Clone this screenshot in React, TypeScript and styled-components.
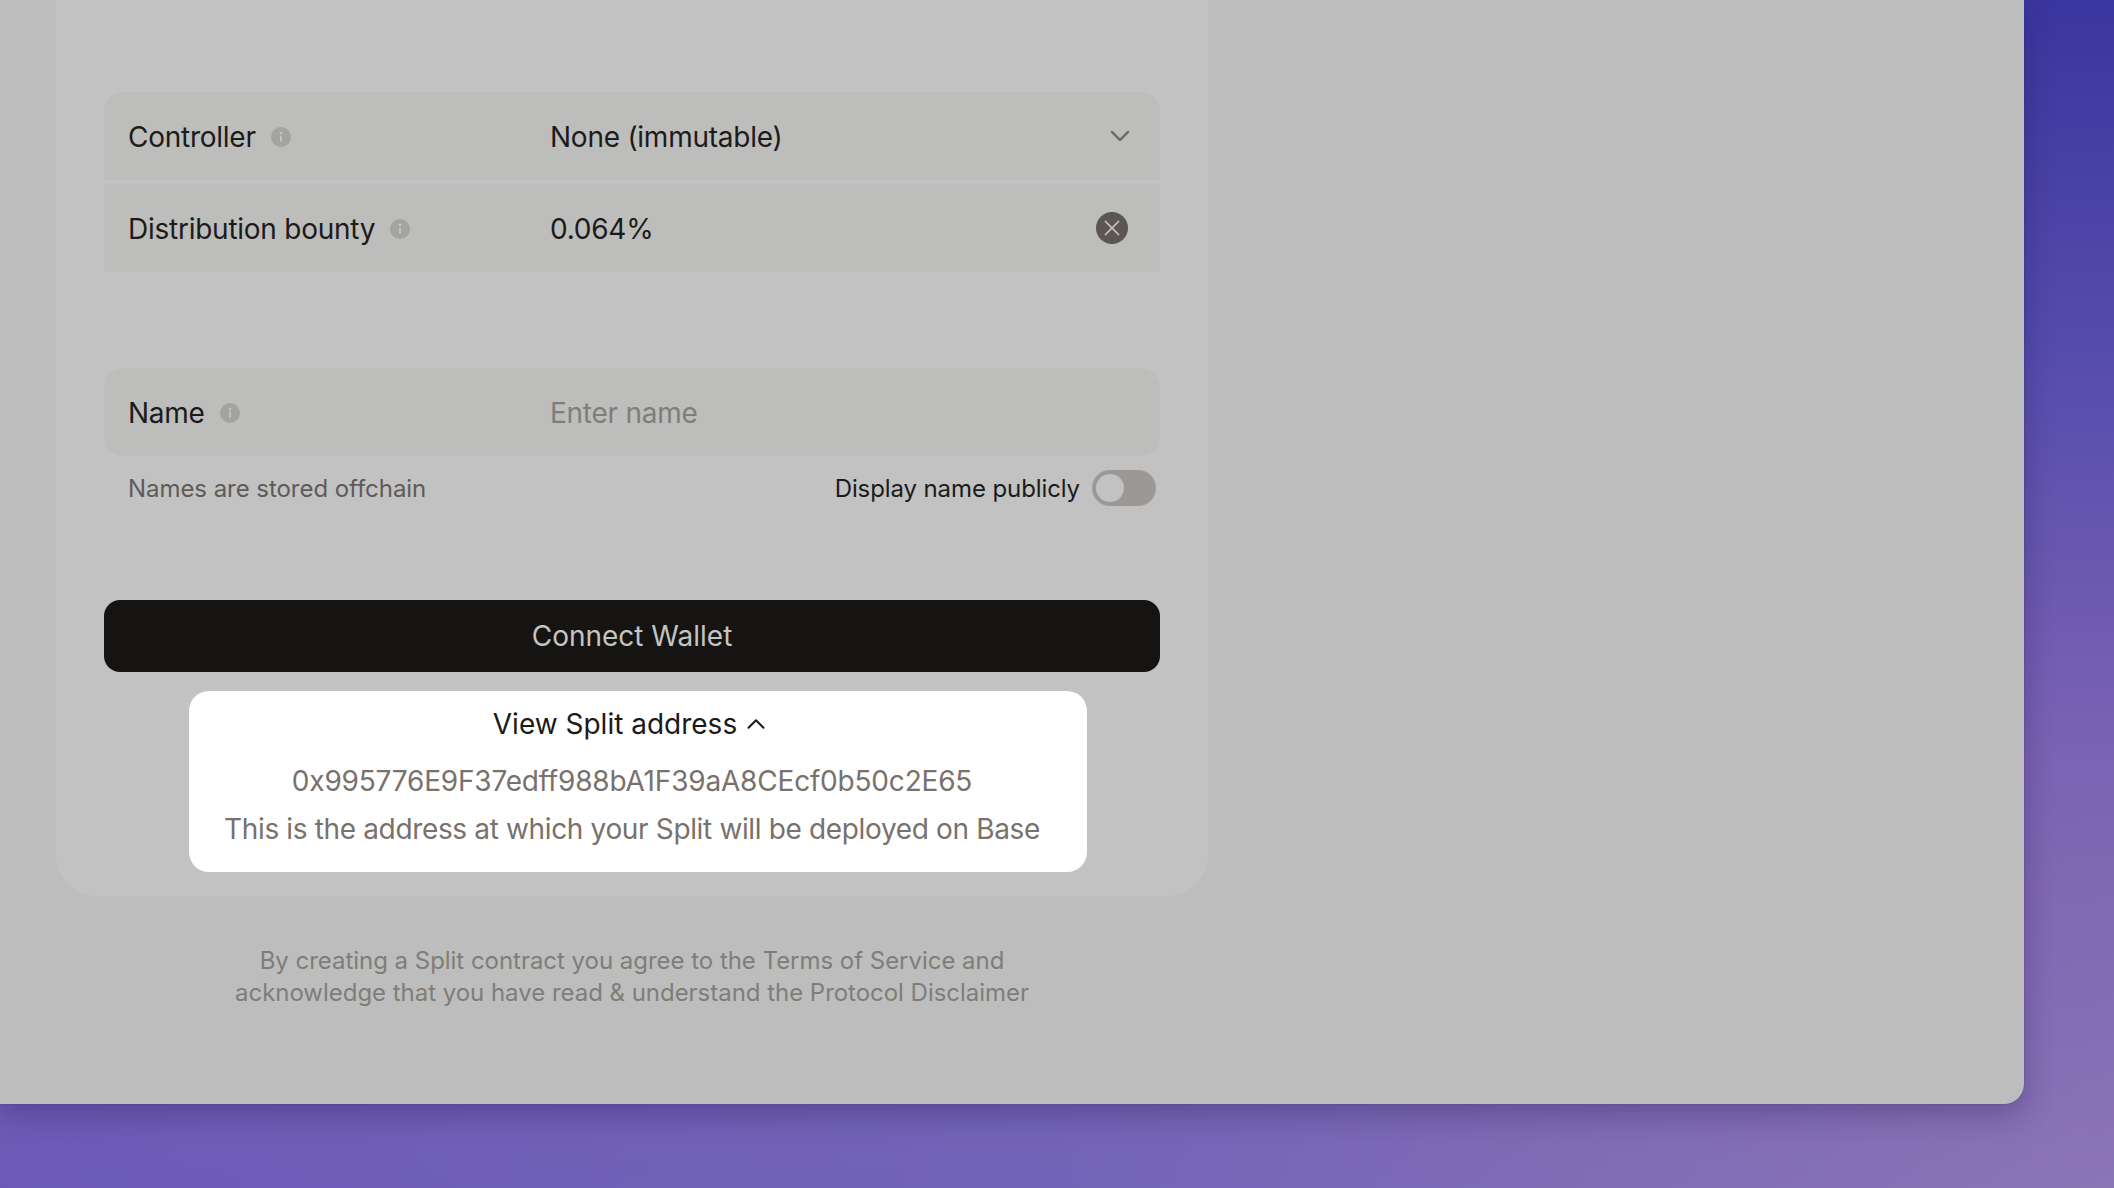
import styled, { createGlobalStyle } from "styled-components";
import { ChevronDown, ChevronUp, X } from "lucide-react";

const GlobalStyle = createGlobalStyle`
  html, body {
    margin: 0;
    height: 100%;
    overflow: hidden;
  }
  body {
    font-family: Inter, "Liberation Sans", sans-serif;
    -webkit-font-smoothing: antialiased;
  }
`;

const Desktop = styled.div`
  width: 2114px;
  height: 1188px;
  background:
    linear-gradient(180deg, #3a369f 0%, #5a4fae 34%, #7c63b3 64%, rgba(140, 117, 181, 0) 100%),
    linear-gradient(90deg, #6b5ab8 0%, #7264b8 50%, #8c75b5 100%);
`;

const AppWindow = styled.main`
  width: 2024px;
  height: 1104px;
  box-sizing: border-box;
  padding-left: 56px;
  background: #bdbdbd;
  border-bottom-right-radius: 20px;
  box-shadow: 0 0 1px rgba(50, 40, 100, 0.7), 0 10px 30px rgba(30, 20, 70, 0.32);
`;

const Card = styled.section`
  width: 1152px;
  height: 896px;
  box-sizing: border-box;
  padding: 92px 48px 0;
  background: #c2c2c2;
  border-bottom-left-radius: 40px;
  border-bottom-right-radius: 40px;
`;

const FieldGroup = styled.div`
  display: flex;
  flex-direction: column;
  gap: 4px;
  margin-bottom: 96px;
`;

const FieldRow = styled.div<{ $shape: "top" | "bottom" | "full" }>`
  height: 88px;
  box-sizing: border-box;
  padding: 0 24px;
  display: flex;
  align-items: center;
  background: #bdbdbc;
  border-radius: ${(p) =>
    p.$shape === "top" ? "20px 20px 0 0" : p.$shape === "full" ? "20px" : "0"};
`;

const LabelCell = styled.div`
  width: 422px;
  flex-shrink: 0;
  display: flex;
  align-items: center;
  gap: 15px;
  padding-top: 1px;
  font-size: 28px;
  letter-spacing: -0.25px;
  color: #1c1b1a;
`;

const ValueCell = styled.div<{ $muted?: boolean }>`
  flex: 1;
  padding-top: 1px;
  font-size: 28px;
  letter-spacing: -0.25px;
  color: ${(p) => (p.$muted ? "#7f7d7a" : "#1c1b1a")};
`;

const InfoDot = styled.svg`
  width: 20px;
  height: 20px;
  flex-shrink: 0;
`;

const SelectChevron = styled(ChevronDown)`
  width: 32px;
  height: 32px;
  color: #6a6866;
`;

const ClearButton = styled.div`
  width: 32px;
  height: 32px;
  margin-right: 8px;
  border-radius: 50%;
  background: #5b5653;
  color: #c6c5c3;
  display: flex;
  align-items: center;
  justify-content: center;
`;

const HelperRow = styled.div`
  display: flex;
  align-items: center;
  justify-content: space-between;
  padding: 14px 4px 0 24px;
  height: 36px;
  margin-bottom: 94px;
`;

const HelperText = styled.span`
  font-size: 24px;
  letter-spacing: -0.05px;
  color: #5e5b58;
`;

const ToggleWrap = styled.div`
  display: flex;
  align-items: center;
  gap: 12px;
  font-size: 24px;
  letter-spacing: -0.1px;
  color: #1c1b1a;
`;

const Toggle = styled.div`
  width: 64px;
  height: 36px;
  box-sizing: border-box;
  padding: 4px;
  border-radius: 18px;
  background: #9b9896;
  display: flex;
  align-items: center;
`;

const ToggleKnob = styled.div`
  width: 28px;
  height: 28px;
  border-radius: 50%;
  background: #c2c2c2;
`;

const ConnectButton = styled.button`
  width: 100%;
  height: 72px;
  display: block;
  border: 0;
  border-radius: 16px;
  background: #151412;
  color: #c4c4c2;
  font-family: inherit;
  font-size: 28px;
`;

const AddressPanel = styled.div`
  height: 181px;
  box-sizing: border-box;
  margin: 19px 73px 0 85px;
  padding: 16px 42px 0 30px;
  background: #ffffff;
  border-radius: 20px;
  display: flex;
  flex-direction: column;
  align-items: center;
  white-space: nowrap;
`;

const PanelToggle = styled.div`
  display: flex;
  align-items: center;
  gap: 4px;
  height: 34px;
  margin-bottom: 16px;
  font-size: 28px;
  color: #1c1917;
`;

const PanelChevron = styled(ChevronUp)`
  width: 30px;
  height: 30px;
  color: #1c1917;
`;

const PanelLine = styled.div<{ $spacing: number }>`
  font-size: 28px;
  line-height: 48px;
  letter-spacing: ${(p) => p.$spacing}px;
  color: #78716c;
`;

const Disclaimer = styled.p`
  width: 1152px;
  margin: 49px 0 0;
  font-size: 24px;
  line-height: 32px;
  letter-spacing: -0.03px;
  text-align: center;
  color: #7f7d7a;
`;

function InfoIcon() {
  return (
    <InfoDot viewBox="0 0 20 20">
      <circle cx="10" cy="10" r="10" fill="#a3a3a2" />
      <circle cx="10" cy="6" r="1.3" fill="#c2c2c0" />
      <rect x="9" y="8.6" width="2" height="6.4" rx="1" fill="#c2c2c0" />
    </InfoDot>
  );
}

export default function App() {
  return (
    <Desktop>
      <GlobalStyle />
      <AppWindow>
        <Card>
          <FieldGroup>
            <FieldRow $shape="top">
              <LabelCell>
                Controller
                <InfoIcon />
              </LabelCell>
              <ValueCell>None (immutable)</ValueCell>
              <SelectChevron strokeWidth={1.8} />
            </FieldRow>
            <FieldRow $shape="bottom">
              <LabelCell>
                Distribution bounty
                <InfoIcon />
              </LabelCell>
              <ValueCell>0.064%</ValueCell>
              <ClearButton>
                <X size={26} strokeWidth={1.6} />
              </ClearButton>
            </FieldRow>
          </FieldGroup>

          <FieldRow $shape="full">
            <LabelCell>
              Name
              <InfoIcon />
            </LabelCell>
            <ValueCell $muted>Enter name</ValueCell>
          </FieldRow>
          <HelperRow>
            <HelperText>Names are stored offchain</HelperText>
            <ToggleWrap>
              Display name publicly
              <Toggle>
                <ToggleKnob />
              </Toggle>
            </ToggleWrap>
          </HelperRow>

          <ConnectButton>Connect Wallet</ConnectButton>
          <AddressPanel>
            <PanelToggle>
              View Split address
              <PanelChevron strokeWidth={1.6} />
            </PanelToggle>
            <PanelLine $spacing={-0.19}>0x995776E9F37edff988bA1F39aA8CEcf0b50c2E65</PanelLine>
            <PanelLine $spacing={-0.35}>
              This is the address at which your Split will be deployed on Base
            </PanelLine>
          </AddressPanel>
        </Card>
        <Disclaimer>
          By creating a Split contract you agree to the Terms of Service and
          <br />
          acknowledge that you have read &amp; understand the Protocol Disclaimer
        </Disclaimer>
      </AppWindow>
    </Desktop>
  );
}
